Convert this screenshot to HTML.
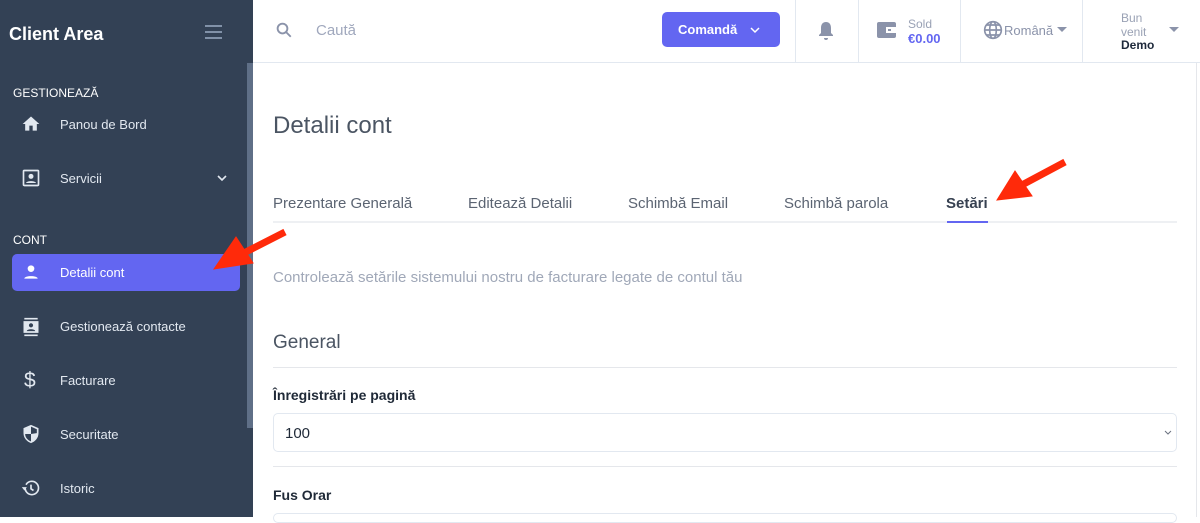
<!DOCTYPE html>
<html><head><meta charset="utf-8"><style>
*{box-sizing:border-box;margin:0;padding:0}
body{width:1200px;height:517px;overflow:hidden;font-family:"Liberation Sans",sans-serif;background:#fff;position:relative}
.sb{position:absolute;left:0;top:0;width:253px;height:517px;background:#334155;color:#e2e8f0}
.sb .logo{position:absolute;left:9px;top:24px;font-size:18px;font-weight:bold;color:#fff}
.sb .ham{position:absolute;left:205px;top:25px;width:17px}
.sb .ham i{display:block;height:2px;background:#8191a8;margin-bottom:4px}
.sec{position:absolute;left:13px;font-size:12px;color:#fff}
.it{position:absolute;left:12px;width:228px;height:37px;font-size:13px;color:#e2e8f0}
.it span{position:absolute;left:48px;top:11px}
.it svg{position:absolute;left:9px;top:8px}
.act{background:#6366f1;border-radius:5px;color:#fff}
.track{position:absolute;left:247px;top:63px;width:6px;height:365px;background:#5f6f87}
.top{position:absolute;left:253px;top:0;width:947px;height:63px;border-bottom:1px solid #e2e8f0}
.vl{position:absolute;top:0;height:62px;width:1px;background:#e2e8f0}
.t{position:absolute;color:#475569}
</style></head><body>
<div class="sb">
<div class="logo">Client Area</div>
<div class="ham"><i></i><i></i><i></i></div>
<div class="sec" style="top:86px">GESTIONEAZĂ</div>
<div class="it" style="top:106px"><svg width="20" height="20" viewBox="0 0 24 24"><path fill="#e2e8f0" d="M10 20v-6h4v6h5v-8h3L12 3 2 12h3v8z"/></svg><span>Panou de Bord</span></div>
<div class="it" style="top:160px"><svg width="20" height="20" viewBox="0 0 24 24"><rect x="3" y="3" width="18" height="18" rx="1" fill="none" stroke="#e2e8f0" stroke-width="2"/><circle cx="12" cy="10" r="3" fill="#e2e8f0"/><path d="M6 18c1-3 11-3 12 0z" fill="#e2e8f0"/></svg><span>Servicii</span><svg style="left:204px;top:12px" width="12" height="12" viewBox="0 0 12 12"><path d="M2 4l4 4 4-4" stroke="#e2e8f0" stroke-width="1.6" fill="none"/></svg></div>
<div class="sec" style="top:233px">CONT</div>
<div class="it act" style="top:254px"><svg width="20" height="20" viewBox="0 0 24 24"><circle cx="12" cy="8" r="4" fill="#fff"/><path d="M4 20c0-4 16-4 16 0z" fill="#fff"/></svg><span>Detalii cont</span></div>
<div class="it" style="top:308px"><svg width="20" height="22" viewBox="0 0 24 24"><path fill="#e2e8f0" d="M4 1h16v2H4zM4 21h16v2H4zM3 5h18v14H3zm9 2.5a2.5 2.5 0 100 5 2.5 2.5 0 000-5zM7 17h10c0-3-10-3-10 0z"/></svg><span>Gestionează contacte</span></div>
<div class="it" style="top:362px"><span style="left:12px;top:7px;font-size:21px">$</span><span>Facturare</span></div>
<div class="it" style="top:416px"><svg width="20" height="20" viewBox="0 0 24 24"><path fill="#e2e8f0" d="M12 1L3 5v6c0 6 4 10 9 12 5-2 9-6 9-12V5zm0 11V3.2l7 3.1V11zm0 0v9c-4-1.6-7-5-7-9z"/></svg><span>Securitate</span></div>
<div class="it" style="top:470px"><svg width="20" height="20" viewBox="0 0 24 24"><path fill="none" stroke="#e2e8f0" stroke-width="2" d="M5 12a8 8 0 108-8 8 8 0 00-7 4M12 8v5l3 2"/><path fill="#e2e8f0" d="M1 11h6l-3 4z"/></svg><span>Istoric</span></div>
<div class="track"></div>
</div>
<div class="top">
<svg style="position:absolute;left:22px;top:21px" width="18" height="18" viewBox="0 0 24 24"><circle cx="10" cy="10" r="6.5" fill="none" stroke="#8b93aa" stroke-width="2.5"/><path d="M15 15l6 6" stroke="#8b93aa" stroke-width="2.5"/></svg>
<div class="t" style="left:63px;top:22px;font-size:15px;color:#a0a8bd">Caută</div>
<div style="position:absolute;left:409px;top:12px;width:118px;height:35px;background:#6366f1;border-radius:5px;color:#fff;font-size:13px;font-weight:bold"><span style="position:absolute;left:16px;top:10px">Comandă</span><svg style="position:absolute;left:88px;top:13px" width="10" height="10" viewBox="0 0 10 10"><path d="M1 3l4 4 4-4" stroke="#fff" stroke-width="1.5" fill="none"/></svg></div>
<div class="vl" style="left:542px"></div>
<svg style="position:absolute;left:565px;top:21px" width="16" height="20" viewBox="0 0 16 20"><path fill="#8b93aa" d="M8 1c-3.5 0-5 2.5-5 6v5l-2 2v1h14v-1l-2-2V7c0-3.5-1.5-6-5-6zM6 17h4a2 2 0 01-4 0z"/></svg>
<div class="vl" style="left:605px"></div>
<svg style="position:absolute;left:623px;top:20px" width="22" height="20" viewBox="0 0 22 20"><rect x="1" y="2" width="19" height="16" rx="2" fill="#8b93aa"/><rect x="10" y="7" width="10" height="6" fill="#fff"/><rect x="12" y="9" width="3" height="2" fill="#8b93aa"/></svg>
<div class="t" style="left:655px;top:17px;font-size:12px;color:#9aa2b5">Sold</div>
<div class="t" style="left:655px;top:31px;font-size:13px;font-weight:bold;color:#6366f1">€0.00</div>
<div class="vl" style="left:707px"></div>
<svg style="position:absolute;left:730px;top:20px" width="20" height="20" viewBox="0 0 24 24"><g fill="none" stroke="#8b93aa" stroke-width="2"><circle cx="12" cy="12" r="10"/><ellipse cx="12" cy="12" rx="4" ry="10"/><path d="M2 12h20M4 6h16M4 18h16"/></g></svg>
<div class="t" style="left:751px;top:23px;font-size:13px;color:#8b93aa">Română</div>
<div style="position:absolute;left:804px;top:27px;border:5px solid transparent;border-top:5px solid #8b93aa"></div>
<div class="vl" style="left:829px"></div>
<div class="t" style="left:868px;top:11px;font-size:12px;color:#9aa2b5;line-height:14px">Bun<br>venit</div>
<div class="t" style="left:868px;top:38px;font-size:12px;font-weight:bold;color:#1e293b">Demo</div>
<div style="position:absolute;left:916px;top:27px;border:5px solid transparent;border-top:5px solid #8b93aa"></div>
</div>
<div style="position:absolute;left:1196px;top:63px;width:1px;height:454px;background:#e5e7eb"></div>
<div class="t" style="left:273px;top:112px;font-size:24px;color:#4b5563">Detalii cont</div>
<div style="position:absolute;left:273px;top:221px;width:904px;height:2px;background:#eef0f3"></div>
<div class="t" style="left:273px;top:195px;font-size:15px;color:#5b6472">Prezentare Generală</div>
<div class="t" style="left:468px;top:195px;font-size:15px;color:#5b6472">Editează Detalii</div>
<div class="t" style="left:628px;top:195px;font-size:15px;color:#5b6472">Schimbă Email</div>
<div class="t" style="left:784px;top:195px;font-size:15px;color:#5b6472">Schimbă parola</div>
<div class="t" style="left:946px;top:195px;font-size:15px;font-weight:bold;color:#374151">Setări</div>
<div style="position:absolute;left:947px;top:221px;width:41px;height:2px;background:#6366f1"></div>
<div class="t" style="left:273px;top:269px;font-size:15px;color:#a0a8b8">Controlează setările sistemului nostru de facturare legate de contul tău</div>
<div class="t" style="left:273px;top:332px;font-size:19px;color:#4b5563">General</div>
<div style="position:absolute;left:273px;top:367px;width:904px;height:1px;background:#e5e7eb"></div>
<div class="t" style="left:273px;top:387px;font-size:14px;font-weight:bold;color:#1f2937">Înregistrări pe pagină</div>
<div style="position:absolute;left:273px;top:413px;width:904px;height:39px;border:1px solid #e2e8f0;border-radius:5px"><span style="position:absolute;left:11px;top:11px;font-size:15px;color:#1f2937">100</span><svg style="position:absolute;right:4px;top:16px" width="8" height="6" viewBox="0 0 8 6"><path d="M1 1l3 3 3-3" stroke="#6b7280" fill="none"/></svg></div>
<div style="position:absolute;left:273px;top:466px;width:904px;height:1px;background:#e5e7eb"></div>
<div class="t" style="left:273px;top:487px;font-size:14px;font-weight:bold;color:#1f2937">Fus Orar</div>
<div style="position:absolute;left:273px;top:513px;width:904px;height:10px;border:1px solid #e2e8f0;border-radius:5px"></div>
<svg style="position:absolute;left:0;top:0" width="1200" height="517"><g fill="#ff2a0a" stroke="#ff2a0a"><path d="M285 232L240 255" stroke-width="7"/><path d="M214 269L236 237L253 263z"/><path d="M1065 162L1020 186" stroke-width="7"/><path d="M997 200L1015 171L1032 196z"/></g></svg>
</body></html>
